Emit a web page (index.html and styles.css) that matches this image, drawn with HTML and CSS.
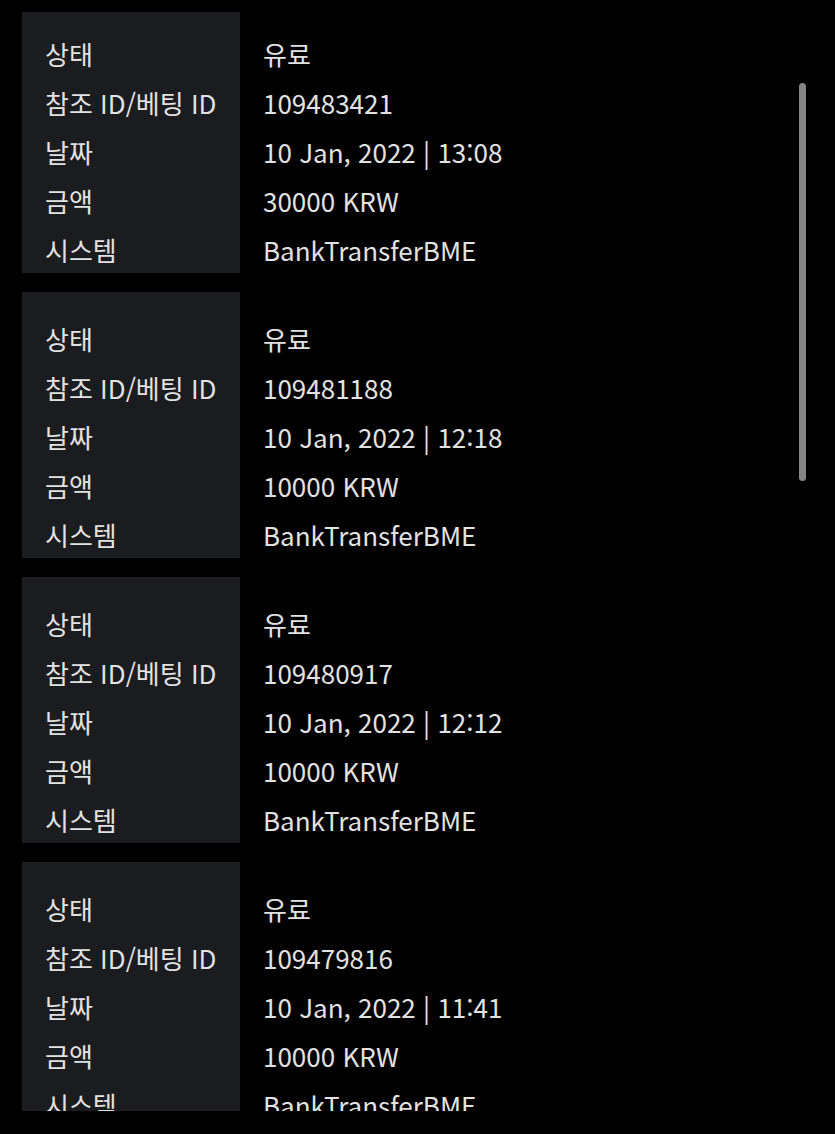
FILE: index.html
```html
<!DOCTYPE html>
<html lang="ko">
  <head>
    <meta charset="UTF-8" />
    <meta name="viewport" content="width=device-width, initial-scale=1.0" />
    <title>거래 내역</title>
    <link rel="stylesheet" href="styles.css">
  </head>
  <body>
    <div class="history">
      <div class="list">
        <div class="card">
          <div class="labels">
            <div class="row">상태</div>
            <div class="row">참조 ID/베팅 ID</div>
            <div class="row">날짜</div>
            <div class="row">금액</div>
            <div class="row">시스템</div>
          </div>
          <div class="values">
            <div class="row">유료</div>
            <div class="row">109483421</div>
            <div class="row">10 Jan, 2022 | 13:08</div>
            <div class="row">30000 KRW</div>
            <div class="row">BankTransferBME</div>
          </div>
        </div>
        <div class="card">
          <div class="labels">
            <div class="row">상태</div>
            <div class="row">참조 ID/베팅 ID</div>
            <div class="row">날짜</div>
            <div class="row">금액</div>
            <div class="row">시스템</div>
          </div>
          <div class="values">
            <div class="row">유료</div>
            <div class="row">109481188</div>
            <div class="row">10 Jan, 2022 | 12:18</div>
            <div class="row">10000 KRW</div>
            <div class="row">BankTransferBME</div>
          </div>
        </div>
        <div class="card">
          <div class="labels">
            <div class="row">상태</div>
            <div class="row">참조 ID/베팅 ID</div>
            <div class="row">날짜</div>
            <div class="row">금액</div>
            <div class="row">시스템</div>
          </div>
          <div class="values">
            <div class="row">유료</div>
            <div class="row">109480917</div>
            <div class="row">10 Jan, 2022 | 12:12</div>
            <div class="row">10000 KRW</div>
            <div class="row">BankTransferBME</div>
          </div>
        </div>
        <div class="card">
          <div class="labels">
            <div class="row">상태</div>
            <div class="row">참조 ID/베팅 ID</div>
            <div class="row">날짜</div>
            <div class="row">금액</div>
            <div class="row">시스템</div>
          </div>
          <div class="values">
            <div class="row">유료</div>
            <div class="row">109479816</div>
            <div class="row">10 Jan, 2022 | 11:41</div>
            <div class="row">10000 KRW</div>
            <div class="row">BankTransferBME</div>
          </div>
        </div>
      </div>
      <div class="scrollbar"></div>
    </div>
  </body>
</html>
```

FILE: styles.css
```css
* {
  margin: 0;
  padding: 0;
  box-sizing: border-box;
}
body {
  background: #000;
  color: #e2e2e2;
  font-family: "Noto Sans CJK KR", "Noto Sans", sans-serif;
  font-size: 26px;
  width: 835px;
  height: 1134px;
  overflow: hidden;
}
.history {
  position: relative;
  margin-top: 12px;
  height: 1099px;
  overflow: hidden;
}
/* list is scrolled a few px down */
.list {
  margin-top: -5px;
  display: flex;
  flex-direction: column;
  gap: 19px;
}
.card {
  display: flex;
  height: 266px;
}
.labels {
  width: 218px;
  margin-left: 22px;
  background: #1b1c20;
  padding: 22px 0 0 23px;
}
.values {
  padding: 22px 0 0 23px;
}
.row {
  height: 49px;
  line-height: 49px;
  white-space: nowrap;
}
.scrollbar {
  position: absolute;
  top: 71px;
  left: 799px;
  width: 7px;
  height: 398px;
  border-radius: 4px;
  background: #858585;
}
```
